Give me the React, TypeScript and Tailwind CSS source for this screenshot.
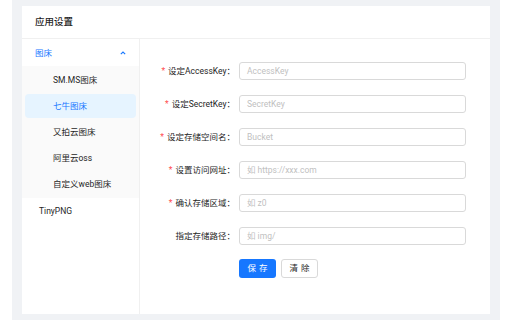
// Settings page: image-host sidebar menu plus the Qiniu config form.
const fields = [
  { label: '设定AccessKey', placeholder: 'AccessKey', required: true },
  { label: '设定SecretKey', placeholder: 'SecretKey', required: true },
  { label: '设定存储空间名', placeholder: 'Bucket', required: true },
  { label: '设置访问网址', placeholder: '如 https://xxx.com', required: true },
  { label: '确认存储区域', placeholder: '如 z0', required: true },
  { label: '指定存储路径', placeholder: '如 img/', required: false },
]

const hosts = ['SM.MS图床', '七牛图床', '又拍云图床', '阿里云oss', '自定义web图床']

export default function App() {
  return (
    <div
      className="w-[512px] h-[320px] bg-white px-[12px] flex text-[#262626]"
      style={{ fontFamily: 'Roboto, "Noto Sans CJK SC", sans-serif' }}
    >
      <div className="flex-1 bg-[#f0f2f5] px-[10px] py-[6px] flex">
        <div className="flex-1 bg-white flex flex-col">
          <div className="h-[33px] border-b border-[#f0f0f0] flex items-center pl-[13px] text-[9.5px] font-medium text-[#1f1f1f]">
            应用设置
          </div>
          <div className="flex flex-1">
            {/* sidebar */}
            <div className="w-[118px] border-r border-[#f0f0f0] pt-[1px] text-[8.5px]">
              <div className="h-[26px] flex items-center justify-between pl-[13px] pr-[13px] text-[#1677ff]">
                <span>图床</span>
                <svg width="6" height="4" viewBox="0 0 6 4">
                  <path d="M0.8 3.2 L3 1 L5.2 3.2" fill="none" stroke="#1677ff" strokeWidth="1.1" />
                </svg>
              </div>
              <div className="bg-[#fafafa] pt-[1px] pb-[1px]">
                {hosts.map((h) => (
                  <div key={h} className="h-[26px] flex items-center px-[3px]">
                    <div
                      className={
                        h === '七牛图床'
                          ? 'h-[24px] w-full rounded-[4px] bg-[#e6f4ff] text-[#1677ff] flex items-center pl-[28px]'
                          : 'h-[24px] w-full flex items-center pl-[28px]'
                      }
                    >
                      {h}
                    </div>
                  </div>
                ))}
              </div>
              <div className="h-[26px] flex items-center pl-[17px]">TinyPNG</div>
            </div>

            {/* form */}
            <div className="flex-1 pt-[23px] flex flex-col gap-[15px] text-[8.5px]">
              {fields.map((f) => (
                <div key={f.label} className="flex items-center h-[18px]">
                  <div className="w-[95px] text-right whitespace-nowrap">
                    {f.required && <span className="text-[#ff4d4f] mr-[3px]">*</span>}
                    {f.label}：
                  </div>
                  <div className="ml-[4px] w-[227px] h-[18px] border border-[#d9d9d9] rounded-[3px] flex items-center pl-[7px] text-[#bfbfbf]">
                    {f.placeholder}
                  </div>
                </div>
              ))}
              <div className="flex gap-[5px] pl-[99px] -mt-[1px]">
                <div className="w-[37px] h-[19px] rounded-[3px] bg-[#1677ff] text-white flex items-center justify-center tracking-[3px] pl-[3px]">
                  保存
                </div>
                <div className="w-[37px] h-[19px] rounded-[3px] border border-[#d9d9d9] flex items-center justify-center tracking-[3px] pl-[3px]">
                  清除
                </div>
              </div>
            </div>
          </div>
        </div>
      </div>
    </div>
  )
}
